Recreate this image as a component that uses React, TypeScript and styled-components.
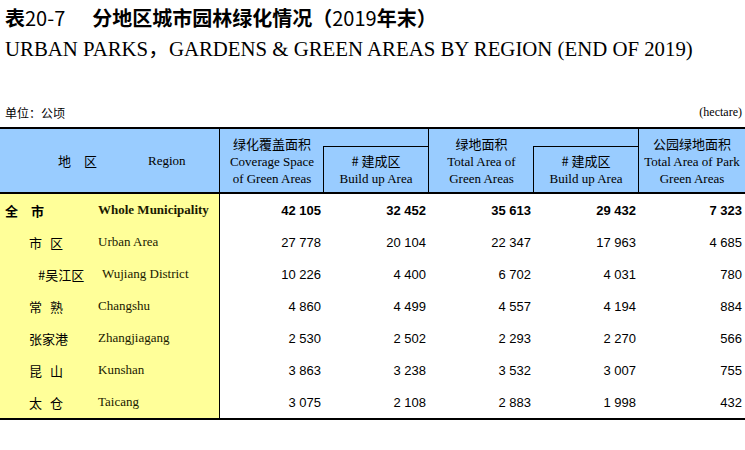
import React from "react";
import styled, { createGlobalStyle } from "styled-components";

const GlobalStyle = createGlobalStyle`
    html, body {
        margin: 0;
        padding: 0;
        background: #ffffff;
    }
    body {
        font-family: "Liberation Serif", "Noto Sans CJK SC", serif;
        color: #000000;
    }
`;

const CJK = `"Noto Sans CJK SC", "Noto Sans", sans-serif`;
const SERIF = `"Liberation Serif", "Noto Sans CJK SC", serif`;
const SANS = `"Liberation Sans", "Noto Sans CJK SC", sans-serif`;

const COLS = "220px 104px 105px 105px 105px 106px";

interface RowData {
    cn: string;
    en: string;
    indent: number;
    spread: number;
    enIndent?: number;
    values: string[];
    total?: boolean;
}

const rows: RowData[] = [
    { cn: "全市", en: "Whole Municipality", indent: 5, spread: 13, values: ["42 105", "32 452", "35 613", "29 432", "7 323"], total: true },
    { cn: "市区", en: "Urban Area", indent: 29, spread: 8, values: ["27 778", "20 104", "22 347", "17 963", "4 685"] },
    { cn: "#吴江区", en: "Wujiang District", indent: 38, spread: 0, enIndent: 4, values: ["10 226", "4 400", "6 702", "4 031", "780"] },
    { cn: "常熟", en: "Changshu", indent: 29, spread: 8, values: ["4 860", "4 499", "4 557", "4 194", "884"] },
    { cn: "张家港", en: "Zhangjiagang", indent: 29, spread: 0, values: ["2 530", "2 502", "2 293", "2 270", "566"] },
    { cn: "昆山", en: "Kunshan", indent: 29, spread: 8, values: ["3 863", "3 238", "3 532", "3 007", "755"] },
    { cn: "太仓", en: "Taicang", indent: 29, spread: 8, values: ["3 075", "2 108", "2 883", "1 998", "432"] },
];

const Page = styled.div`
    width: 745px;
    height: 450px;
    overflow: hidden;
`;

const Title = styled.h1`
    margin: 0;
    padding: 3px 0 0 5px;
    height: 33px;
    font-family: ${CJK};
    font-size: 20px;
    font-weight: 700;
    line-height: 30px;
    white-space: nowrap;
`;

const TitleNum = styled.span`
    font-weight: 400;
`;

const TitleName = styled.span`
    margin-left: 27px;
`;

const Subtitle = styled.h2`
    margin: 0;
    padding-left: 5px;
    height: 28px;
    font-family: ${SERIF};
    font-size: 20.8px;
    font-weight: 400;
    line-height: 26px;
    white-space: nowrap;
`;

const UnitRow = styled.div`
    display: flex;
    justify-content: space-between;
    align-items: center;
    margin-top: 38px;
    padding: 0 3px 0 5px;
    height: 20px;
`;

const UnitCn = styled.span`
    font-family: ${CJK};
    font-size: 12px;
`;

const UnitEn = styled.span`
    font-family: ${SERIF};
    font-size: 12px;
`;

const Table = styled.div`
    margin-top: 5px;
    border-top: 2px solid #000;
    border-bottom: 2px solid #000;
`;

const Head = styled.div`
    display: grid;
    grid-template-columns: ${COLS};
    grid-template-rows: 17px 46px;
    background: #99ccff;
    border-bottom: 2px solid #000;
`;

const HeadCell = styled.div<{ $col: number; $row: string; $right?: boolean; $left?: boolean; $top?: boolean }>`
    grid-column: ${(p) => p.$col};
    grid-row: ${(p) => p.$row};
    display: flex;
    flex-direction: column;
    align-items: center;
    justify-content: center;
    text-align: center;
    border-right: ${(p) => (p.$right ? "1px solid #000" : "none")};
    border-left: ${(p) => (p.$left ? "1px solid #000" : "none")};
    border-top: ${(p) => (p.$top ? "1px solid #000" : "none")};
    margin-left: ${(p) => (p.$left ? "-1px" : "0")};
`;

const RegionHead = styled.div`
    grid-column: 1;
    grid-row: 1 / 3;
    display: flex;
    align-items: center;
    padding-left: 58px;
    border-right: 1px solid #000;
`;

const HeadCn = styled.div`
    font-family: ${CJK};
    font-size: 13px;
    line-height: 18px;
    white-space: nowrap;
`;

const HeadEn = styled.div`
    font-family: ${SERIF};
    font-size: 13px;
    line-height: 17px;
    white-space: nowrap;
`;

const RegionLabel = styled(HeadEn)`
    margin-left: 51px;
`;

const Row = styled.div`
    display: grid;
    grid-template-columns: ${COLS};
    height: 32px;
`;

const NameCell = styled.div`
    display: grid;
    grid-template-columns: 98px 1fr;
    align-items: center;
    background: #ffff99;
    border-right: 1px solid #000;
`;

const NameCn = styled.span<{ $indent: number; $spread: number; $bold?: boolean }>`
    padding-left: ${(p) => p.$indent}px;
    font-family: ${CJK};
    font-size: 13px;
    font-weight: ${(p) => (p.$bold ? 700 : 400)};
    letter-spacing: ${(p) => p.$spread}px;
    white-space: nowrap;
`;

const NameEn = styled.span<{ $indent?: number; $bold?: boolean }>`
    padding-left: ${(p) => p.$indent ?? 0}px;
    font-family: ${SERIF};
    font-size: 13px;
    font-weight: ${(p) => (p.$bold ? 700 : 400)};
    color: #1a1a00;
    white-space: nowrap;
`;

const NumCell = styled.div<{ $bold?: boolean }>`
    display: flex;
    align-items: center;
    justify-content: flex-end;
    padding-right: 3px;
    font-family: ${SANS};
    font-size: 13px;
    font-weight: ${(p) => (p.$bold ? 700 : 400)};
    white-space: nowrap;
`;

export default function App() {
    return (
        <Page>
            <GlobalStyle />
            <Title>
                表<TitleNum>20-7</TitleNum>
                <TitleName>
                    分地区城市园林绿化情况（<TitleNum>2019</TitleNum>年末）
                </TitleName>
            </Title>
            <Subtitle>URBAN PARKS，GARDENS &amp; GREEN AREAS BY REGION (END OF 2019)</Subtitle>
            <UnitRow>
                <UnitCn>单位：公顷</UnitCn>
                <UnitEn>(hectare)</UnitEn>
            </UnitRow>
            <Table>
                <Head>
                    <RegionHead>
                        <HeadCn>地　区</HeadCn>
                        <RegionLabel>Region</RegionLabel>
                    </RegionHead>
                    <HeadCell $col={2} $row="1 / 3">
                        <HeadCn>绿化覆盖面积</HeadCn>
                        <HeadEn>Coverage Space</HeadEn>
                        <HeadEn>of Green Areas</HeadEn>
                    </HeadCell>
                    <HeadCell $col={3} $row="1" $right />
                    <HeadCell $col={3} $row="2" $left $top $right>
                        <HeadCn># 建成区</HeadCn>
                        <HeadEn>Build up Area</HeadEn>
                    </HeadCell>
                    <HeadCell $col={4} $row="1 / 3">
                        <HeadCn>绿地面积</HeadCn>
                        <HeadEn>Total Area of</HeadEn>
                        <HeadEn>Green Areas</HeadEn>
                    </HeadCell>
                    <HeadCell $col={5} $row="1" $right />
                    <HeadCell $col={5} $row="2" $left $top $right>
                        <HeadCn># 建成区</HeadCn>
                        <HeadEn>Build up Area</HeadEn>
                    </HeadCell>
                    <HeadCell $col={6} $row="1 / 3">
                        <HeadCn>公园绿地面积</HeadCn>
                        <HeadEn>Total Area of Park</HeadEn>
                        <HeadEn>Green Areas</HeadEn>
                    </HeadCell>
                </Head>
                {rows.map((r) => (
                    <Row key={r.cn}>
                        <NameCell>
                            <NameCn $indent={r.indent} $spread={r.spread} $bold={r.total}>
                                {r.cn}
                            </NameCn>
                            <NameEn $indent={r.enIndent} $bold={r.total}>
                                {r.en}
                            </NameEn>
                        </NameCell>
                        {r.values.map((v, i) => (
                            <NumCell key={i} $bold={r.total}>
                                {v}
                            </NumCell>
                        ))}
                    </Row>
                ))}
            </Table>
        </Page>
    );
}
